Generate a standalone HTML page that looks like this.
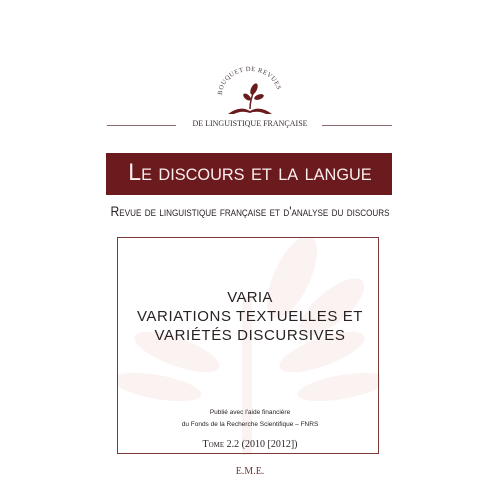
<!DOCTYPE html>
<html><head><meta charset="utf-8"><style>
html,body{margin:0;padding:0;background:#fff;}
body{width:500px;height:500px;position:relative;overflow:hidden;font-family:"Liberation Sans",sans-serif;color:#2a2222;}
.a{position:absolute;white-space:nowrap;}
.c{left:0;width:500px;text-align:center;}
.sc{font-variant:small-caps;}
</style></head><body>
<svg class="a" style="left:117px;top:237px" width="263" height="218">
<g fill="#fbf3f2">
<ellipse cx="175" cy="40" rx="18" ry="45" transform="rotate(25 175 40)"/>
<ellipse cx="215" cy="70" rx="16" ry="40" transform="rotate(50 215 70)"/>
<ellipse cx="60" cy="115" rx="14" ry="45" transform="rotate(-70 60 115)"/>
<ellipse cx="205" cy="115" rx="14" ry="45" transform="rotate(70 205 115)"/>
<ellipse cx="40" cy="150" rx="12" ry="45" transform="rotate(-80 40 150)"/>
<ellipse cx="225" cy="150" rx="12" ry="45" transform="rotate(80 225 150)"/>
<rect x="125" y="60" width="10" height="160"/>
</g></svg>
<svg class="a" style="left:210px;top:65px" width="80" height="55" viewBox="0 0 80 55">
<defs><path id="arc" d="M12 30 A28 24 0 0 1 68 30"/></defs>
<text font-family="Liberation Serif,serif" font-size="6.5" fill="#4a3a3a" letter-spacing="0.5"><textPath href="#arc">BOUQUET DE REVUES</textPath></text>
<path d="M40 44 C40 36 42 30 45 24" stroke="#6b1a1e" stroke-width="1.5" fill="none"/>
<ellipse cx="44" cy="24" rx="3" ry="6" fill="#6b1a1e" transform="rotate(25 44 24)"/>
<ellipse cx="49" cy="32" rx="2.5" ry="5" fill="#6b1a1e" transform="rotate(70 49 32)"/>
<ellipse cx="37" cy="32" rx="2.5" ry="4.5" fill="#6b1a1e" transform="rotate(-50 37 32)"/>
<path d="M18 49 Q30 40 40 46 Q50 40 62 49 L56 49 Q48 45 40 48 Q32 45 24 49Z" fill="#6b1a1e"/>
</svg>
<div class="a" style="left:107px;top:125px;width:69px;height:1px;background:#8a6a6a"></div>
<div class="a" style="left:322px;top:125px;width:70px;height:1px;background:#8a6a6a"></div>
<div class="a c" style="top:119px;font-family:'Liberation Serif',serif;font-size:8px;color:#3a3030;">DE LINGUISTIQUE FRANÇAISE</div>
<div class="a" style="left:106px;top:153px;width:286px;height:42px;background:#6b1a1e;"></div>
<div class="a c sc" style="top:159px;font-size:24px;color:#fbeeee;transform:scaleX(0.96);">Le discours et la langue</div>
<div class="a c sc" style="top:204px;font-size:13.5px;color:#2a2222;transform:scaleX(0.9);">Revue de linguistique française et d'analyse du discours</div>
<div class="a" style="left:117px;top:237px;width:262px;height:217px;border:1px solid #7a3a3a;box-sizing:border-box;"></div>
<div class="a c" style="top:289px;font-size:15px;letter-spacing:0.3px;">VARIA</div>
<div class="a c" style="top:308px;font-size:15px;letter-spacing:0.6px;">VARIATIONS TEXTUELLES ET</div>
<div class="a c" style="top:327px;font-size:15px;letter-spacing:0.6px;">VARIÉTÉS DISCURSIVES</div>
<div class="a c" style="top:409px;font-size:6.5px;">Publié avec l'aide financière</div>
<div class="a c" style="top:421px;font-size:6.5px;">du Fonds de la Recherche Scientifique – FNRS</div>
<div class="a c sc" style="top:439px;font-family:'Liberation Serif',serif;font-size:10px;">Tome 2.2 (2010 [2012])</div>
<div class="a c" style="top:466px;font-family:'Liberation Serif',serif;font-size:10px;color:#6b3a3a;">E.M.E.</div>
</body></html>
